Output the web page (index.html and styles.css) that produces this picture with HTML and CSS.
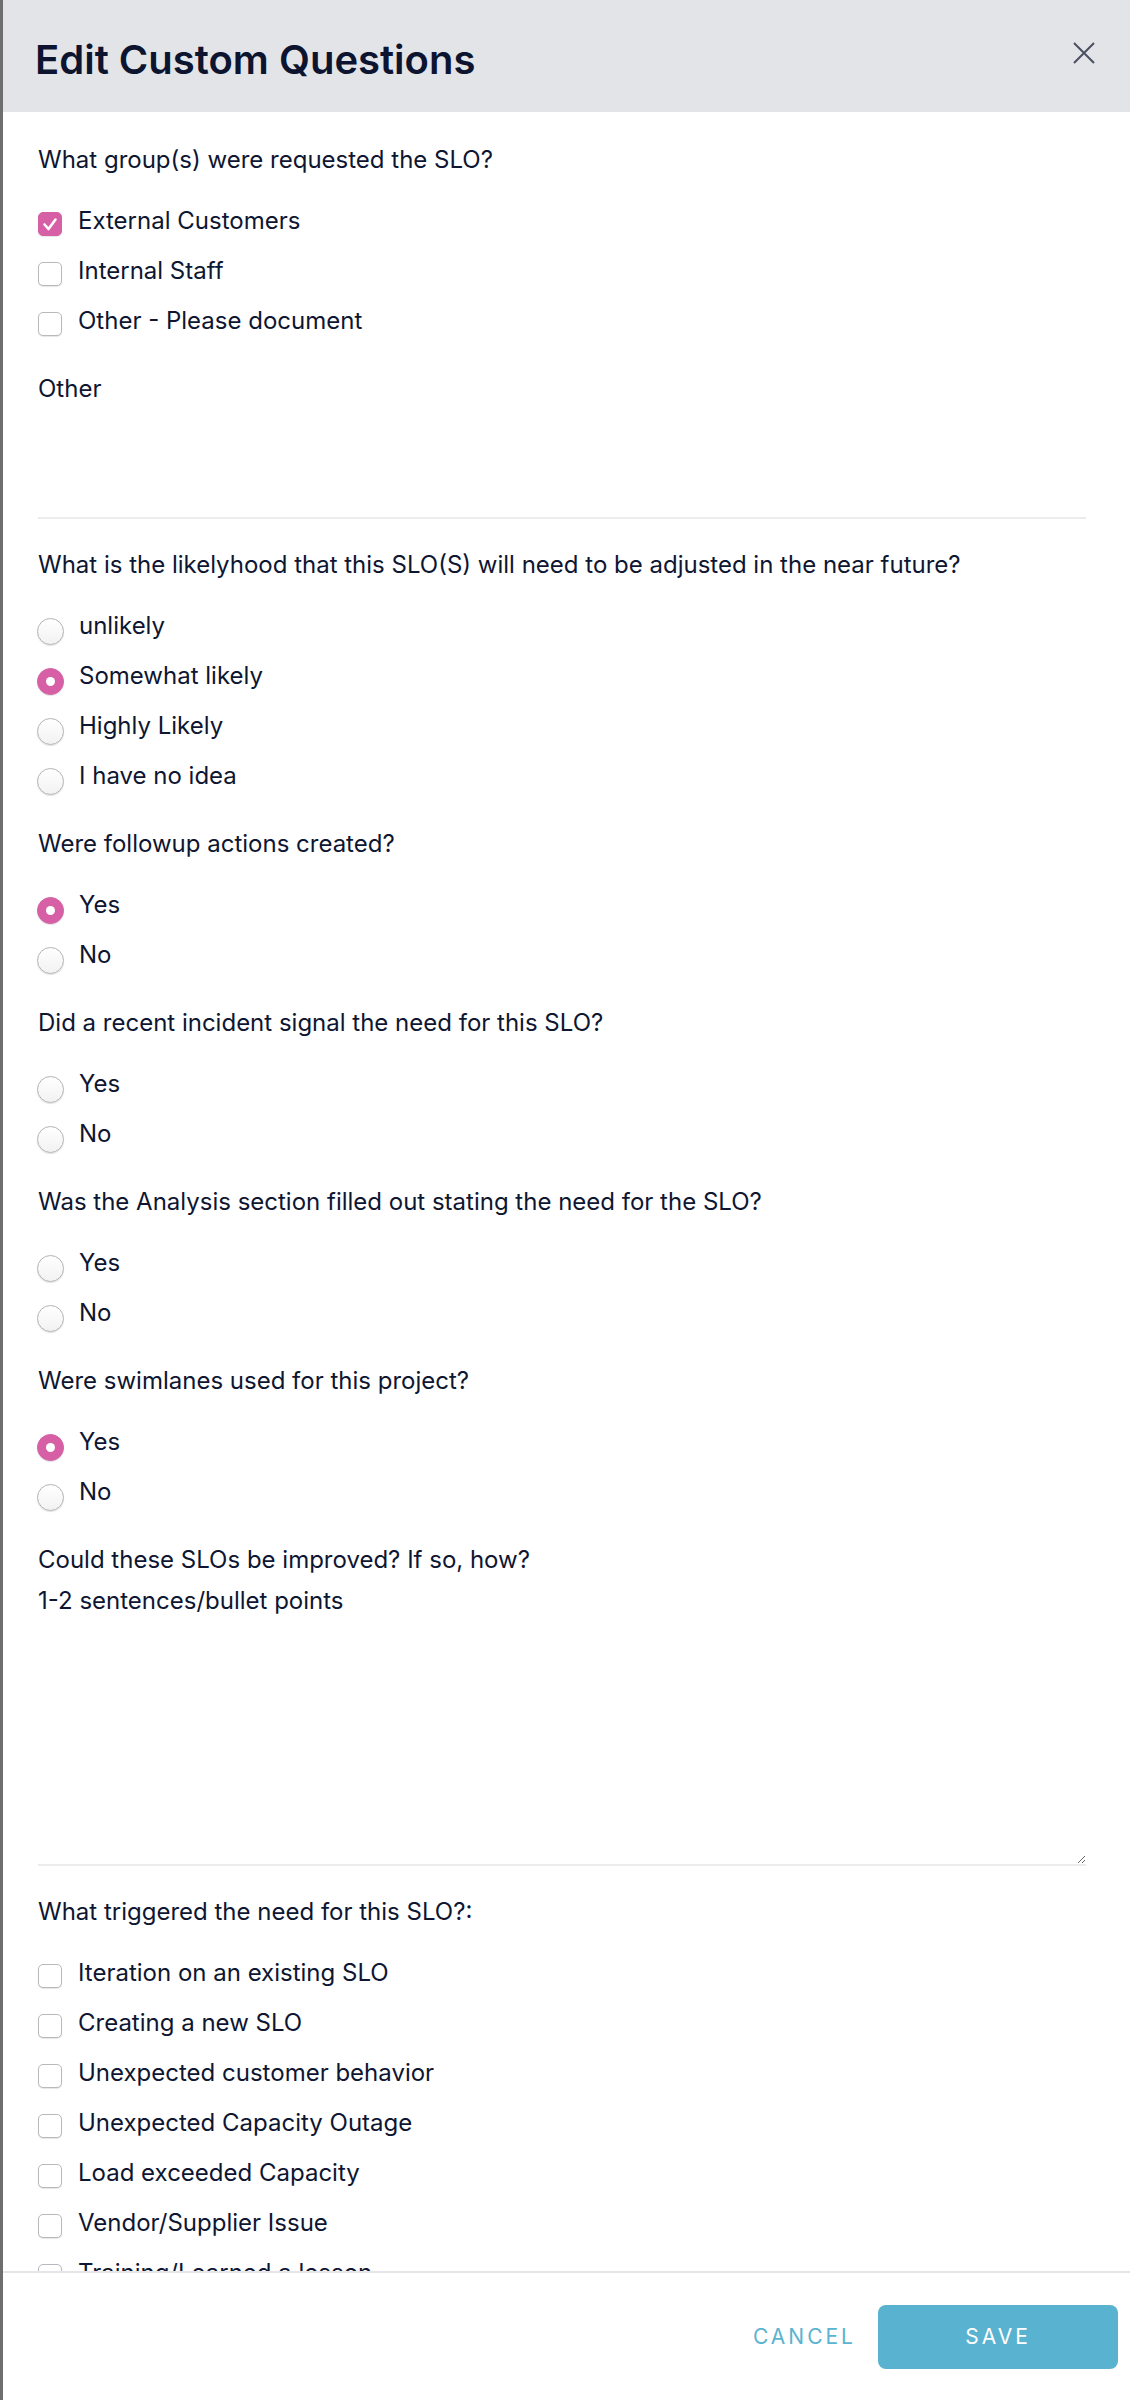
FILE: index.html
```html
<!DOCTYPE html>
<html lang="en">
<head>
    <meta charset="UTF-8">
    <meta name="viewport" content="width=device-width, initial-scale=1.0">
    <title>Edit Custom Questions</title>
    <link rel="stylesheet" href="styles.css">
</head>
<body>
    <div class="modal">
        <header class="modal-header">
            <h2>Edit Custom Questions</h2>
            <button class="close-btn" aria-label="Close">
                <svg width="22" height="22" viewBox="0 0 22 22"><path d="M1 1 L21 21 M21 1 L1 21" stroke="#4a4f64" stroke-width="2" fill="none"/></svg>
            </button>
        </header>

        <div class="modal-body">
            <div class="question">
                <div class="q-label">What group(s) were requested the SLO?</div>
                <label class="option"><span class="checkbox checked"><svg width="24" height="24" viewBox="0 0 24 24"><polyline points="6.5,12.5 10.5,17 17.5,7.5" stroke="#fff" stroke-width="2.6" fill="none" stroke-linecap="round" stroke-linejoin="round"/></svg></span>External Customers</label>
                <label class="option"><span class="checkbox"></span>Internal Staff</label>
                <label class="option"><span class="checkbox"></span>Other - Please document</label>
            </div>

            <div class="question field">
                <div class="q-label">Other</div>
                <input type="text" class="text-input">
            </div>

            <div class="question">
                <div class="q-label">What is the likelyhood that this SLO(S) will need to be adjusted in the near future?</div>
                <label class="option"><span class="radio"></span>unlikely</label>
                <label class="option"><span class="radio checked"></span>Somewhat likely</label>
                <label class="option"><span class="radio"></span>Highly Likely</label>
                <label class="option"><span class="radio"></span>I have no idea</label>
            </div>

            <div class="question">
                <div class="q-label">Were followup actions created?</div>
                <label class="option"><span class="radio checked"></span>Yes</label>
                <label class="option"><span class="radio"></span>No</label>
            </div>

            <div class="question">
                <div class="q-label">Did a recent incident signal the need for this SLO?</div>
                <label class="option"><span class="radio"></span>Yes</label>
                <label class="option"><span class="radio"></span>No</label>
            </div>

            <div class="question">
                <div class="q-label">Was the Analysis section filled out stating the need for the SLO?</div>
                <label class="option"><span class="radio"></span>Yes</label>
                <label class="option"><span class="radio"></span>No</label>
            </div>

            <div class="question">
                <div class="q-label">Were swimlanes used for this project?</div>
                <label class="option"><span class="radio checked"></span>Yes</label>
                <label class="option"><span class="radio"></span>No</label>
            </div>

            <div class="question field">
                <div class="q-label">Could these SLOs be improved? If so, how?</div>
                <div class="q-hint">1-2 sentences/bullet points</div>
                <textarea class="text-area"></textarea>
            </div>

            <div class="question">
                <div class="q-label">What triggered the need for this SLO?:</div>
                <label class="option"><span class="checkbox"></span>Iteration on an existing SLO</label>
                <label class="option"><span class="checkbox"></span>Creating a new SLO</label>
                <label class="option"><span class="checkbox"></span>Unexpected customer behavior</label>
                <label class="option"><span class="checkbox"></span>Unexpected Capacity Outage</label>
                <label class="option"><span class="checkbox"></span>Load exceeded Capacity</label>
                <label class="option"><span class="checkbox"></span>Vendor/Supplier Issue</label>
                <label class="option"><span class="checkbox"></span>Training/Learned a lesson</label>
            </div>
        </div>

        <footer class="modal-footer">
            <button class="cancel-btn">CANCEL</button>
            <button class="save-btn">SAVE</button>
        </footer>
    </div>
</body>
</html>
```

FILE: styles.css
```css
body {
    margin: 0;
    padding: 0;
    background: #6e6e6e;
    font-family: 'Inter', 'Noto Sans', sans-serif;
    color: #0e1631;
    overflow: hidden;
}
.modal {
    margin-left: 3px;
    height: 2400px;
    background: #ffffff;
    display: flex;
    flex-direction: column;
}
.modal-header {
    height: 112px;
    flex-shrink: 0;
    background: #e3e4e8;
    display: flex;
    justify-content: space-between;
    align-items: center;
    padding: 6px 35px 0 32px;
    box-sizing: border-box;
}
.modal-header h2 {
    margin: 0;
    font-size: 40px;
    font-weight: 600;
    color: #0c1430;
}
.close-btn {
    background: none;
    border: none;
    padding: 0;
    width: 22px;
    height: 22px;
    margin-top: -12px;
    cursor: pointer;
}
.close-btn svg {
    display: block;
}
.modal-body {
    flex: 1;
    overflow: hidden;
    padding: 30px 44px 0 35px;
}
.question {
    margin-bottom: 26px;
}
.question.field {
    margin-bottom: 28px;
}
.q-label {
    font-size: 24px;
    line-height: 36px;
    margin-bottom: 17px;
}
.q-hint {
    font-size: 24px;
    line-height: 36px;
    margin-top: -12px;
    margin-bottom: 17px;
}
.option {
    height: 50px;
    display: flex;
    align-items: center;
    font-size: 24px;
    cursor: pointer;
}
.checkbox {
    width: 22px;
    height: 22px;
    margin: 8px 16px 0 0;
    border: 1px solid #b9b9bd;
    border-radius: 5px;
    background: #fff;
    box-shadow: 0 1px 1px rgba(0, 0, 0, 0.1);
    flex-shrink: 0;
    position: relative;
}
.checkbox.checked {
    background: #d65fa6;
    border-color: #d65fa6;
}
.checkbox svg {
    position: absolute;
    top: -1px;
    left: -1px;
}
.radio {
    width: 25px;
    height: 25px;
    margin: 12px 15px 0 -1px;
    border: 1px solid #b3b3b7;
    border-radius: 50%;
    background: linear-gradient(#ffffff, #f2f2f2);
    box-shadow: 0 1px 1px rgba(0, 0, 0, 0.12);
    flex-shrink: 0;
    display: flex;
    align-items: center;
    justify-content: center;
}
.radio.checked {
    background: #d65fa6;
    border-color: #d65fa6;
}
.radio.checked::after {
    content: "";
    width: 9px;
    height: 9px;
    border-radius: 50%;
    background: #fff;
}
.text-input, .text-area {
    display: block;
    width: 100%;
    box-sizing: border-box;
    border: none;
    border-bottom: 2px solid #ececee;
    outline: none;
    font-family: inherit;
    font-size: 24px;
    background: transparent;
}
.text-input {
    height: 95px;
}
.text-area {
    height: 230px;
    resize: vertical;
}
.modal-footer {
    height: 129px;
    flex-shrink: 0;
    border-top: 2px solid #e6e6ea;
    box-sizing: border-box;
    display: flex;
    justify-content: flex-end;
    align-items: center;
    gap: 22px;
    padding-right: 12px;
}
.cancel-btn, .save-btn {
    font-family: inherit;
    font-size: 21px;
    letter-spacing: 3px;
    border: none;
    cursor: pointer;
}
.cancel-btn {
    background: none;
    color: #5ab3d1;
    padding: 0;
}
.save-btn {
    width: 240px;
    height: 64px;
    background: #59b2d0;
    color: #ffffff;
    border-radius: 8px;
}
```
